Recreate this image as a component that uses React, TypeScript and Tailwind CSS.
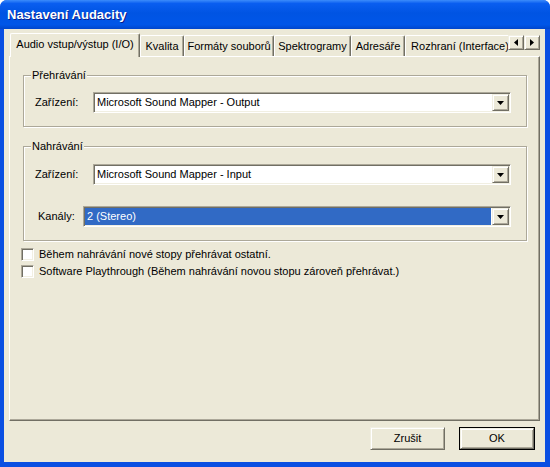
import React from 'react';

// Classic 3D edges used by the dialog's controls
const sunken = 'border border-t-[#ACA899] border-l-[#ACA899] border-r-white border-b-white shadow-[inset_1px_1px_0_#716F64,inset_-1px_-1px_0_#F1EFE2]';
const raised = 'border border-t-[#F1EFE2] border-l-[#F1EFE2] border-r-[#716F64] border-b-[#716F64] shadow-[inset_1px_1px_0_#fff,inset_-1px_-1px_0_#ACA899]';

const DownArrow: React.FC = () => (
    <svg width="7" height="4" viewBox="0 0 7 4">
        <path d="M0 0h7L3.5 4z" fill="#000" />
    </svg>
);

const ComboBox: React.FC<{ value: string; width: string; selected?: boolean }> = ({ value, width, selected }) => (
    <div className={`${sunken} ${width} h-[21px] bg-white flex p-[1px]`}>
        <div className={`flex-1 flex items-center pl-[2px] ${selected ? 'bg-[#316AC5] text-white' : ''}`}>
            {value}
        </div>
        <div className={`${raised} w-[17px] h-full bg-[#ECE9D8] flex items-center justify-center ml-[1px]`}>
            <DownArrow />
        </div>
    </div>
);

const GroupBox: React.FC<{ title: string; className: string; children: React.ReactNode }> = ({ title, className, children }) => (
    <div className={`relative border border-[#ACA899] shadow-[inset_1px_1px_0_#fff,1px_1px_0_#fff] ${className}`}>
        <span className="absolute -top-[7px] left-[7px] px-[1px] bg-[#ECE9D8] leading-[13px]">{title}</span>
        {children}
    </div>
);

const Checkbox: React.FC<{ label: string }> = ({ label }) => (
    <div className="flex items-center h-[13px]">
        <div className={`${sunken} w-[13px] h-[13px] bg-white`} />
        <span className="ml-[5px] leading-[13px]">{label}</span>
    </div>
);

const tabs = [
    { label: 'Kvalita', w: 'w-[44px]' },
    { label: 'Formáty souborů', w: 'w-[90px]' },
    { label: 'Spektrogramy', w: 'w-[77px]' },
    { label: 'Adresáře', w: 'w-[54px]' },
    { label: 'Rozhraní (Interface)', w: 'w-[110px]' },
];

const ScrollButton: React.FC<{ dir: 'left' | 'right' }> = ({ dir }) => (
    <div className={`${raised} w-[16px] h-[15px] mt-[2px] bg-[#ECE9D8] flex items-center justify-center`}>
        <svg width="4" height="7" viewBox="0 0 4 7">
            {dir === 'left' ? <path d="M4 0v7L0 3.5z" fill="#000" /> : <path d="M0 0v7l4-3.5z" fill="#000" />}
        </svg>
    </div>
);

export default function App() {
    return (
        <div className="w-[550px] h-[467px] flex flex-col bg-[#0A4FE2] rounded-t-[7px] overflow-hidden font-['Liberation_Sans',Arial,sans-serif] text-[11px] text-black">
            <div className="h-[29px] shrink-0 px-[7px] flex items-center bg-[linear-gradient(180deg,#3C8CFB_0%,#0A5EF0_12%,#0054E3_45%,#0056E8_85%,#0046CC_100%)]">
                <span className="text-white font-bold text-[13px] [text-shadow:1px_1px_0_#0A1E8C]">Nastavení Audacity</span>
            </div>
            <div className="flex-1 ml-[4px] mr-[5px] mb-[5px] bg-[#ECE9D8] pt-[4px] px-[5px] flex flex-col">
                <div className="h-[23px] flex items-end">
                    <div className="ml-[1px] w-[498px] flex items-end overflow-hidden h-[24px] -mb-[1px] relative z-10">
                        <div className="w-[130px] h-[24px] shrink-0 bg-[#ECE9D8] border-l border-t border-white border-r border-r-[#716F64] shadow-[inset_-1px_0_0_#ACA899] rounded-tl-[2px] rounded-tr-[2px] flex items-center justify-center pb-[2px] whitespace-nowrap">
                            Audio vstup/výstup (I/O)
                        </div>
                        {tabs.map(t => (
                            <div
                                key={t.label}
                                className={`${t.w} h-[21px] mb-[1px] shrink-0 bg-[#ECE9D8] border-l border-t border-white border-r border-r-[#716F64] shadow-[inset_-1px_0_0_#ACA899] rounded-tl-[2px] rounded-tr-[2px] flex items-center justify-center whitespace-nowrap`}
                            >
                                {t.label}
                            </div>
                        ))}
                    </div>
                    <div className="self-start flex">
                        <ScrollButton dir="left" />
                        <ScrollButton dir="right" />
                    </div>
                </div>
                <div className="h-[365px] border-l border-t border-white border-r border-b border-r-[#716F64] border-b-[#716F64] shadow-[inset_-1px_-1px_0_#ACA899] pt-[18px] pl-[13px] pr-[12px]">
                    <GroupBox title="Přehrávání" className="h-[52px] pt-[16px]">
                        <div className="flex items-center">
                            <span className="pl-[11px] w-[69px]">Zařízení:</span>
                            <ComboBox value="Microsoft Sound Mapper - Output" width="w-[418px]" />
                        </div>
                    </GroupBox>
                    <GroupBox title="Nahrávání" className="mt-[19px] h-[95px] pt-[17px]">
                        <div className="flex items-center">
                            <span className="pl-[11px] w-[69px]">Zařízení:</span>
                            <ComboBox value="Microsoft Sound Mapper - Input" width="w-[418px]" />
                        </div>
                        <div className="flex items-center mt-[21px]">
                            <span className="pl-[14px] w-[59px]">Kanály:</span>
                            <ComboBox value="2 (Stereo)" width="w-[428px]" selected />
                        </div>
                    </GroupBox>
                    <div className="mt-[7px] -ml-[2px] flex flex-col gap-[4px]">
                        <Checkbox label="Během nahrávání nové stopy přehrávat ostatní." />
                        <Checkbox label="Software Playthrough (Během nahrávání novou stopu zároveň přehrávat.)" />
                    </div>
                </div>
                <div className="mt-[6px] pr-[5px] flex justify-end gap-[14px]">
                    <button className={`${raised} w-[75px] h-[23px] bg-[#ECE9D8] flex items-center justify-center`}>Zrušit</button>
                    <div className="w-[76px] h-[23px] border border-black">
                        <button className={`${raised} w-full h-full bg-[#ECE9D8] flex items-center justify-center`}>OK</button>
                    </div>
                </div>
            </div>
        </div>
    );
}
